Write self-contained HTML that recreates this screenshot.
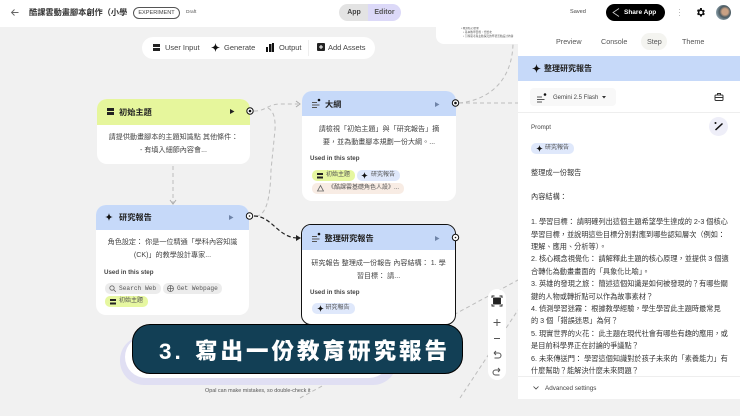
<!DOCTYPE html>
<html><head><meta charset="utf-8">
<style>
*{box-sizing:border-box;margin:0;padding:0}
html,body{width:740px;height:416px;overflow:hidden;background:#f1f1f1}
body{font-family:"Liberation Sans","Noto Sans CJK TC",sans-serif;color:#222;position:relative}
.a{position:absolute;white-space:nowrap}
.node{position:absolute;background:#fff;border-radius:10px;overflow:hidden}
.head{position:absolute;left:0;right:0;top:0;height:25px}
.title{position:absolute;left:23px;top:5px;font-size:8.2px;line-height:15px;font-weight:700;color:#222;white-space:nowrap}
.body{position:absolute;left:4px;right:4px;top:33px;text-align:center;font-size:7.1px;line-height:12.6px;color:#444;white-space:nowrap}
.used{position:absolute;left:8px;font-size:6.2px;line-height:8px;font-weight:700;color:#444;white-space:nowrap}
.chip{position:absolute;height:10.5px;border-radius:5px;font-size:6px;line-height:11.5px;color:#555;white-space:nowrap;padding-left:14px}
.y{background:#e6f7a0}.b{background:#dfe8fb}.g{background:#ececec}.o{background:#f8ece4}
.mono{font-family:"Liberation Mono",monospace;font-size:6.2px}
.tab{position:absolute;top:36px;font-size:7.2px;line-height:11px;color:#555;white-space:nowrap}
.tb{position:absolute;top:42px;font-size:7.5px;line-height:11px;color:#444;white-space:nowrap}
svg{position:absolute;overflow:visible}
</style></head><body>
<!-- connections -->
<svg style="left:0;top:0" width="740" height="416" fill="none" stroke="#bdbdbd" stroke-width="1" stroke-dasharray="4 3">
<path d="M254 111 C266 111 268 104 280 104 H298"/>
<path d="M268 108 Q276 112 275 130 L271 170 Q270 216 256 216"/>
<path d="M173 166 V203"/>
<path d="M459 103 H518"/>
<path d="M459 103 C490 100 512 80 513 44"/>
<path d="M300 398 L518 280"/>
<path d="M460 398 L518 310"/>
</svg>
<svg style="left:0;top:0" width="740" height="416" fill="none" stroke="#222" stroke-width="1.2" stroke-dasharray="4 2.5">
<path d="M254 216 C272 216 278 238 298 238"/>
</svg>
<svg style="left:0;top:0" width="740" height="416" fill="#222"><path d="M296 235 L301 238 L296 241Z"/></svg>
<svg style="left:0;top:0" width="740" height="416" fill="none" stroke="#aaa"><path d="M170 200 L173 204 L176 200"/><path d="M296 101 L300 104 L296 107"/></svg>

<!-- top-right mini node -->
<div class="node" style="left:436px;top:20px;width:90px;height:24px;border-radius:8px"></div>
<div class="a" style="left:461px;top:27px;font-size:2.7px;line-height:4px;color:#555">• 教案核心要求<br>&nbsp;&nbsp;&nbsp;• 基本教學目標，分層次<br>&nbsp;&nbsp;&nbsp;• 引導思考與主動探究的學習活動設計內容</div>

<!-- header -->
<div class="a" style="left:0;top:0;width:740px;height:27px;background:#fff"></div>
<svg style="left:10px;top:8px" width="10" height="9" fill="none" stroke="#666" stroke-width=".9"><path d="M8.500 4.500H1.500M4.500 1.500L1.500 4.500L4.500 7.500"/></svg>
<div class="a" style="left:29px;top:5px;font-size:8.2px;line-height:15px;font-weight:700;color:#333">酷課雲動畫腳本創作（小學</div>
<div class="a" style="left:133px;top:6.5px;width:47px;height:12px;border:1px solid #555;border-radius:6px;font-size:5.6px;line-height:10px;text-align:center;color:#444">EXPERIMENT</div>
<div class="a" style="left:186px;top:9px;font-size:4.8px;line-height:7px;color:#555">Draft</div>
<div class="a" style="left:339px;top:4px;width:30px;height:17px;background:#e3e3e3;border-radius:9px 0 0 9px;font-size:7px;font-weight:700;line-height:17px;text-align:center;color:#444">App</div>
<div class="a" style="left:368px;top:4px;width:33px;height:17px;background:#dcd9f8;border-radius:0 9px 9px 0;font-size:7px;font-weight:700;line-height:17px;text-align:center;color:#555">Editor</div>
<div class="a" style="left:570px;top:8px;font-size:5.6px;line-height:9px;color:#444">Saved</div>
<div class="a" style="left:606px;top:4px;width:59px;height:17px;background:#000;border-radius:9px"></div>
<svg style="left:611px;top:7px" width="10" height="11" fill="none" stroke="#ccc" stroke-width=".8"><path d="M8 1.500L2 5.500L8 9.500"/></svg>
<div class="a" style="left:624px;top:7px;font-size:6.5px;font-weight:700;line-height:11px;color:#fff">Share App</div>
<div class="a" style="left:679px;top:9px;width:1.4px;height:1.4px;background:#bbb;box-shadow:0 3px #bbb,0 6px #bbb"></div>
<svg style="left:694.500px;top:7px" width="11" height="11" viewBox="0 0 24 24"><path fill="#111" d="M19.400 13c.1-.3.1-.7.1-1s0-.7-.1-1l2.100-1.600-2-3.500-2.500 1a8 8 0 0 0-1.700-1L15 2.300h-4l-.4 2.600a8 8 0 0 0-1.700 1l-2.500-1-2 3.500L6.500 11c-.1.300-.1.700-.1 1s0 .7.100 1l-2.100 1.600 2 3.500 2.500-1a8 8 0 0 0 1.700 1l.4 2.600h4l.4-2.600a8 8 0 0 0 1.700-1l2.500 1 2-3.500zM13 15.500a3.500 3.500 0 1 1 0-7 3.500 3.500 0 0 1 0 7z"/></svg>
<div class="a" style="left:716px;top:5px;width:15px;height:15px;border-radius:50%;background:radial-gradient(circle at 60% 45%,#c9a184 0 25%,#4a5a62 45%,#8fa3ad 75%)"></div>

<!-- toolbar -->
<div class="a" style="left:142px;top:37px;width:233px;height:22px;background:#fff;border-radius:11px"></div>
<div class="a" style="left:153px;top:44px;width:7px;height:3px;background:#222;box-shadow:0 4px #222"></div>
<div class="tb" style="left:165px">User Input</div>
<svg style="left:211px;top:43px" width="9" height="9"><path fill="#111" d="M4.500 0C5 3 6 4 9 4.500 6 5 5 6 4.500 9 4 6 3 5 0 4.500 3 4 4 3 4.500 0Z"/></svg>
<div class="tb" style="left:224px">Generate</div>
<svg style="left:266px;top:43px" width="8" height="9" fill="#111"><rect x="0" y="4" width="2" height="5"/><rect x="3" y="1" width="2.500" height="8"/><rect x="6" y="0" width="2" height="9"/></svg>
<div class="tb" style="left:279px">Output</div>
<div class="a" style="left:308px;top:40px;width:1px;height:16px;background:#eee"></div>
<svg style="left:317px;top:43px" width="8" height="8"><rect width="8" height="8" rx="1" fill="#222"/><path d="M4 2V6M2 4H6" stroke="#fff" stroke-width="1"/></svg>
<div class="tb" style="left:328px">Add Assets</div>

<!-- node 1 -->
<div class="node" style="left:97px;top:99px;width:153px;height:65px">
<div class="head" style="height:26px;background:#e6f69c"></div>
<div style="position:absolute;left:10px;top:9px;width:7px;height:3px;background:#222;box-shadow:0 4px #222"></div>
<div class="title" style="left:22px;top:6px">初始主題</div>
<svg style="left:133px;top:10px" width="5" height="5"><path d="M0 0L4.500 2.500L0 5Z" fill="#222"/></svg>
<div class="body" style="top:32px">請提供動畫腳本的主題知識點 其他條件：<br>- 有填入細節內容會...</div>
</div>
<!-- node 2 -->
<div class="node" style="left:96px;top:205px;width:153px;height:110px">
<div class="head" style="background:#c6d9f9"></div>
<svg style="left:9px;top:8px;" width="8" height="8"><path fill="#111" d="M4 0C4.400 2.600 5.400 3.600 8 4 5.400 4.400 4.400 5.400 4 8 3.600 5.400 2.600 4.400 0 4 2.600 3.600 3.600 2.600 4 0Z"/></svg>
<div class="title" style="top:5px">研究報告</div>
<svg style="left:133px;top:10px" width="5" height="5"><path d="M0 0L4.500 2.500L0 5Z" fill="#6f84a8"/></svg>
<div class="body" style="top:31px">角色設定： 你是一位精通「學科內容知識<br>(CK)」的教學設計專家...</div>
<div class="used" style="top:64px">Used in this step</div>
<div class="chip g mono" style="left:9px;top:78px;width:56px">Search Web</div>
<div class="chip g mono" style="left:67px;top:78px;width:59px">Get Webpage</div>
<div class="chip y" style="left:9px;top:91px;width:43px">初始主題</div>
<svg style="left:13px;top:80px" width="7" height="7" fill="none" stroke="#666" stroke-width=".8"><circle cx="3" cy="3" r="2.200"/><path d="M4.600 4.600L6.800 6.800"/></svg>
<svg style="left:71px;top:80px" width="7" height="7" fill="none" stroke="#666" stroke-width=".8"><circle cx="3.500" cy="3.500" r="3"/><path d="M.5 3.500H6.500M3.500 .5V6.500"/></svg>
<div style="position:absolute;left:14px;top:93.500px;width:6px;height:2.500px;background:#222;box-shadow:0 3.500px #222"></div>
</div>
<!-- node 3 -->
<div class="node" style="left:302px;top:91px;width:154px;height:110px">
<div class="head" style="background:#c6d9f9"></div>
<svg style="left:10px;top:7px" width="9" height="11" fill="none" stroke="#555" stroke-width=".9"><path d="M0 4.500H5M0 7H7.500M0 9.500H5"/><circle cx="7" cy="2" r="1.300" fill="#111" stroke="none"/></svg>
<div class="title" style="top:6px">大綱</div>
<svg style="left:133px;top:10.500px" width="5" height="5"><path d="M0 0L4.500 2.500L0 5Z" fill="#6f84a8"/></svg>
<div class="body" style="top:32px">請檢視「初始主題」與「研究報告」摘<br>要，並為動畫腳本規劃一份大綱。...</div>
<div class="used" style="top:64px">Used in this step</div>
<div class="chip y" style="left:10px;top:79px;width:43px">初始主題</div>
<div class="chip b" style="left:55px;top:79px;width:43px">研究報告</div>
<div class="chip o" style="left:10px;top:92px;width:92px;padding-left:16px">《酷課雲基礎角色人設》...</div>
<div style="position:absolute;left:14.500px;top:81.500px;width:6px;height:2.500px;background:#222;box-shadow:0 3.500px #222"></div>
<svg style="left:59px;top:81px" width="7" height="7"><path fill="#111" d="M3.500 0C3.900 2.300 4.700 3.100 7 3.500 4.700 3.900 3.900 4.700 3.500 7 3.100 4.700 2.300 3.900 0 3.500 2.300 3.100 3.100 2.300 3.500 0Z"/></svg>
<svg style="left:15px;top:94px" width="7" height="7" fill="none" stroke="#666" stroke-width=".8"><path d="M3.500 .5L6.500 6H.5Z"/></svg>
</div>
<!-- node 4 -->
<div class="node" style="left:301px;top:224px;width:155px;height:101px;border:1.500px solid #111">
<div class="head" style="background:#c6d9f9"></div>
<svg style="left:9.500px;top:7px" width="9" height="11" fill="none" stroke="#555" stroke-width=".9"><path d="M0 4.500H5M0 7H7.500M0 9.500H5"/><circle cx="7" cy="2" r="1.300" fill="#111" stroke="none"/></svg>
<div class="title" style="left:22.500px;top:5.500px">整理研究報告</div>
<svg style="left:133px;top:10.500px" width="5" height="5"><path d="M0 0L4.500 2.500L0 5Z" fill="#6f84a8"/></svg>
<div class="body" style="top:32px">研究報告 整理成一份報告 內容結構： 1. 學<br>習目標： 請...</div>
<div class="used" style="top:64px">Used in this step</div>
<div class="chip b" style="left:9.500px;top:78px;width:43px">研究報告</div>
<svg style="left:14.500px;top:80px" width="7" height="7"><path fill="#111" d="M3.500 0C3.900 2.300 4.700 3.100 7 3.500 4.700 3.900 3.900 4.700 3.500 7 3.100 4.700 2.300 3.900 0 3.500 2.300 3.100 3.100 2.300 3.500 0Z"/></svg>
</div>
<!-- ports -->
<svg style="left:0;top:0" width="740" height="416" fill="#fff" stroke="#111" stroke-width="1">
<circle cx="250" cy="111" r="3.200"/><circle cx="249.500" cy="216" r="3.200"/><circle cx="455.500" cy="103" r="3.200"/><circle cx="455.500" cy="237.500" r="3.200"/>
<g fill="#111" stroke="none"><circle cx="250" cy="111" r="1.300"/><circle cx="249.500" cy="216" r=".8"/><circle cx="455.500" cy="103" r="1.300"/><circle cx="455.500" cy="237.500" r=".8"/></g>
</svg>

<!-- side zoom controls -->
<div class="a" style="left:488px;top:289px;width:18px;height:91px;background:#fff;border-radius:9px"></div>
<svg style="left:491px;top:295px" width="12" height="12" fill="none" stroke="#222" stroke-width=".9"><rect x="2.500" y="3" width="7" height="6" fill="#222"/><path d="M1 3V1H3.500M8.500 1H11V3M1 9V11H3.500M8.500 11H11V9"/></svg>
<svg style="left:491px;top:317px" width="12" height="60" fill="none" stroke="#555" stroke-width="1"><path d="M2.500 5.500H9.500M6 2V9"/><path d="M3 21.500H9"/><path d="M3 36H7.500A2.500 2.500 0 0 1 7.500 41H3.500M3 36L5 34M3 36L5 38"/><path d="M9 53H4.500A2.500 2.500 0 0 0 4.500 58H8.500M9 53L7 51M9 53L7 55"/></svg>

<!-- chat input behind banner -->
<div class="a" style="left:120px;top:336px;width:277px;height:49px;background:#e0dff3;border-radius:24px"></div>
<div class="a" style="left:125px;top:336px;width:265px;height:42px;background:#fff;border-radius:21px"></div>
<div class="a" style="left:205px;top:387px;font-size:5.4px;line-height:8px;color:#555">Opal can make mistakes, so double-check it</div>

<!-- banner -->
<div class="a" style="left:132px;top:324px;width:331px;height:50px;background:#123f55;border:1.200px solid #000;border-radius:18px"></div>
<div class="a" style="left:159px;top:337px;font-size:22.500px;line-height:30px;font-weight:900;color:#fff;letter-spacing:3px">3.</div>
<div class="a" style="left:195px;top:337px;font-size:22.500px;line-height:30px;font-weight:900;color:#fff;letter-spacing:3px">寫出一份教育研究報告</div>

<!-- right panel -->
<div class="a" style="left:518px;top:27px;width:222px;height:372px;background:#fff"></div>
<div class="tab" style="left:556px">Preview</div>
<div class="tab" style="left:601px">Console</div>
<div class="a" style="left:641px;top:33px;width:26px;height:17px;background:#f4f4f0;border-radius:9px"></div>
<div class="tab" style="left:647px">Step</div>
<div class="tab" style="left:682px">Theme</div>
<div class="a" style="left:518px;top:56px;width:222px;height:25px;background:#c6d9f9"></div>
<svg style="left:532px;top:64px" width="9" height="9"><path fill="#111" d="M4.500 0C5 3 6 4 9 4.500 6 5 5 6 4.500 9 4 6 3 5 0 4.500 3 4 4 3 4.500 0Z"/></svg>
<div class="a" style="left:544px;top:61px;font-size:8px;line-height:15px;font-weight:700;color:#222">整理研究報告</div>
<div class="a" style="left:530px;top:88px;width:86px;height:18px;background:#f8f8f8;border-radius:4px"></div>
<svg style="left:537px;top:92px" width="10" height="11" fill="none" stroke="#555" stroke-width=".9"><path d="M0 5H5M0 7.500H7.500M0 10H5"/><circle cx="8" cy="2.500" r="1.300" fill="#111" stroke="none"/></svg>
<div class="a" style="left:553px;top:92.500px;font-size:6px;line-height:10px;color:#444">Gemini 2.5 Flash</div>
<svg style="left:602px;top:96px" width="4" height="3"><path d="M0 0H4L2 2.500Z" fill="#333"/></svg>
<svg style="left:714px;top:92px" width="10" height="10" fill="none" stroke="#333" stroke-width="1"><rect x="1" y="3" width="8" height="5.500" rx="1"/><path d="M3.500 3V1.500H6.500V3M1 5.500H9"/></svg>
<div class="a" style="left:518px;top:112px;width:222px;height:1px;background:#eee"></div>
<div class="a" style="left:531px;top:122.500px;font-size:6.200px;line-height:10px;color:#444">Prompt</div>
<div class="a" style="left:709px;top:117px;width:19px;height:19px;border-radius:50%;background:#eeeef8"></div>
<svg style="left:713px;top:120px" width="12" height="12" fill="none"><path d="M2.500 10L9.500 3.500" stroke="#111" stroke-width="1.500"/><circle cx="2.500" cy="3" r="1" fill="#111"/></svg>
<div class="chip b" style="left:531px;top:143px;width:43px;height:10.500px;font-size:6px;padding-left:14px">研究報告</div>
<svg style="left:536px;top:145px" width="7" height="7"><path fill="#111" d="M3.500 0C3.900 2.300 4.700 3.100 7 3.500 4.700 3.900 3.900 4.700 3.500 7 3.100 4.700 2.300 3.900 0 3.500 2.300 3.100 3.100 2.300 3.500 0Z"/></svg>
<div class="a" style="left:531px;top:166.500px;font-size:7.200px;line-height:12.400px;color:#333">整理成一份報告<br><br>內容結構：<br><br>1. 學習目標： 請明確列出這個主題希望學生達成的 2-3 個核心<br>學習目標，並說明這些目標分別對應到哪些認知層次（例如：<br>理解、應用、分析等）。<br>2. 核心概念視覺化： 請解釋此主題的核心原理，並提供 3 個適<br>合轉化為動畫畫面的「具象化比喻」。<br>3. 英雄的發現之旅： 簡述這個知識是如何被發現的？有哪些關<br>鍵的人物或轉折點可以作為故事素材？<br>4. 偵測學習迷霧： 根據教學經驗，學生學習此主題時最常見<br>的 3 個「錯誤迷思」為何？<br>5. 現實世界的火花： 此主題在現代社會有哪些有趣的應用，或<br>是目前科學界正在討論的爭議點？<br>6. 未來傳送門： 學習這個知識對於孩子未來的「素養能力」有<br>什麼幫助？能解決什麼未來問題？</div>
<div class="a" style="left:518px;top:376px;width:222px;height:23px;background:#fff;border-top:1px solid #eee"></div>
<svg style="left:533px;top:386px" width="6" height="4" fill="none" stroke="#444" stroke-width=".8"><path d="M.5 .5L3 3L5.500 .5"/></svg>
<div class="a" style="left:545px;top:384px;font-size:6.300px;line-height:10px;color:#444">Advanced settings</div>
</body></html>
